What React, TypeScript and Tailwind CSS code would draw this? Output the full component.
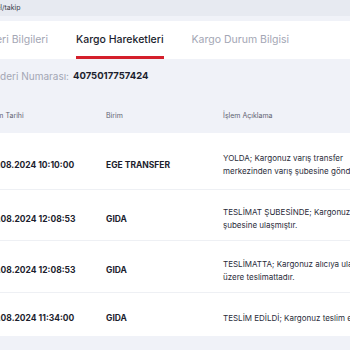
import React from 'react';

const rows = [
  {
    date: '29.08.2024 10:10:00',
    unit: 'EGE TRANSFER',
    lines: ['YOLDA; Kargonuz varış transfer', 'merkezinden varış şubesine gönderilmiştir.'],
    h: 'h-[57px]',
  },
  {
    date: '30.08.2024 12:08:53',
    unit: 'GIDA',
    lines: ['TESLİMAT ŞUBESİNDE; Kargonuz teslimat', 'şubesine ulaşmıştır.'],
    h: 'h-[51px]',
  },
  {
    date: '30.08.2024 12:08:53',
    unit: 'GIDA',
    lines: ['TESLİMATTA; Kargonuz alıcıya ulaştırılmak', 'üzere teslimattadır.'],
    h: 'h-[52px]',
  },
  {
    date: '30.08.2024 11:34:00',
    unit: 'GIDA',
    lines: ['TESLİM EDİLDİ; Kargonuz teslim edilmiştir.'],
    h: 'h-[43px]',
  },
];

export default function App() {
  return (
    <div className="w-[350px] h-[350px] overflow-hidden bg-[#f0f2f8] font-['Inter',sans-serif] text-[#1c1e2e]">
      {/* Breadcrumb */}
      <div className="h-[16px] bg-[#e7eaf1] flex items-center overflow-hidden">
        <div className="w-[2px] flex justify-end shrink-0 whitespace-nowrap text-[7px] text-[#3a3d4a]">
          genel
        </div>
        <span className="text-[7px] text-[#3a3d4a]">/takip</span>
      </div>

      {/* Tabs */}
      <div className="mt-[5px] h-[38px] bg-white flex items-stretch whitespace-nowrap text-[10.5px]">
        <div className="w-[48px] shrink-0 flex justify-end items-center text-[#a3a6b4]">
          <span>Gönderi Bilgileri</span>
        </div>
        <div className="ml-[28px] shrink-0 flex items-center border-b-[3px] border-[#d41f2b] pt-[3px] font-medium text-[#1c1e2e]">
          Kargo Hareketleri
        </div>
        <div className="ml-[28px] shrink-0 flex items-center text-[#a3a6b4]">
          Kargo Durum Bilgisi
        </div>
      </div>

      {/* Tracking number */}
      <div className="h-[33px] pt-[2px] flex items-center whitespace-nowrap text-[10px]">
        <div className="w-[69px] shrink-0 flex justify-end text-[#a3a6b4]">
          <span>Gönderi Numarası:</span>
        </div>
        <span className="ml-[4px] text-[9.5px] font-bold text-[#1c1e2e]">4075017757424</span>
      </div>

      {/* Table header */}
      <div className="h-[41px] pt-[8px] flex items-center whitespace-nowrap text-[7px] text-[#5f6372]">
        <div className="w-[106px] shrink-0 overflow-hidden">
          <span className="block -ml-[14px]">İşlem Tarihi</span>
        </div>
        <div className="w-[117px] shrink-0">Birim</div>
        <div>İşlem Açıklama</div>
      </div>

      {/* Rows */}
      <div className="bg-white">
        {rows.map((r, i) => (
          <div
            key={i}
            className={`${r.h} pt-[8px] flex items-center whitespace-nowrap ${i < rows.length - 1 ? 'border-b border-[#eef0f4]' : ''}`}
          >
            <div className="w-[106px] shrink-0 overflow-hidden">
              <span className="block -ml-[13px] text-[8.5px] font-bold">{r.date}</span>
            </div>
            <div className="w-[117px] shrink-0 text-[8.5px] font-bold">{r.unit}</div>
            <div className="text-[8px] leading-[13px] text-[#2a2c3a]">
              {r.lines.map((l, j) => (
                <div key={j}>{l}</div>
              ))}
            </div>
          </div>
        ))}
      </div>
    </div>
  );
}
